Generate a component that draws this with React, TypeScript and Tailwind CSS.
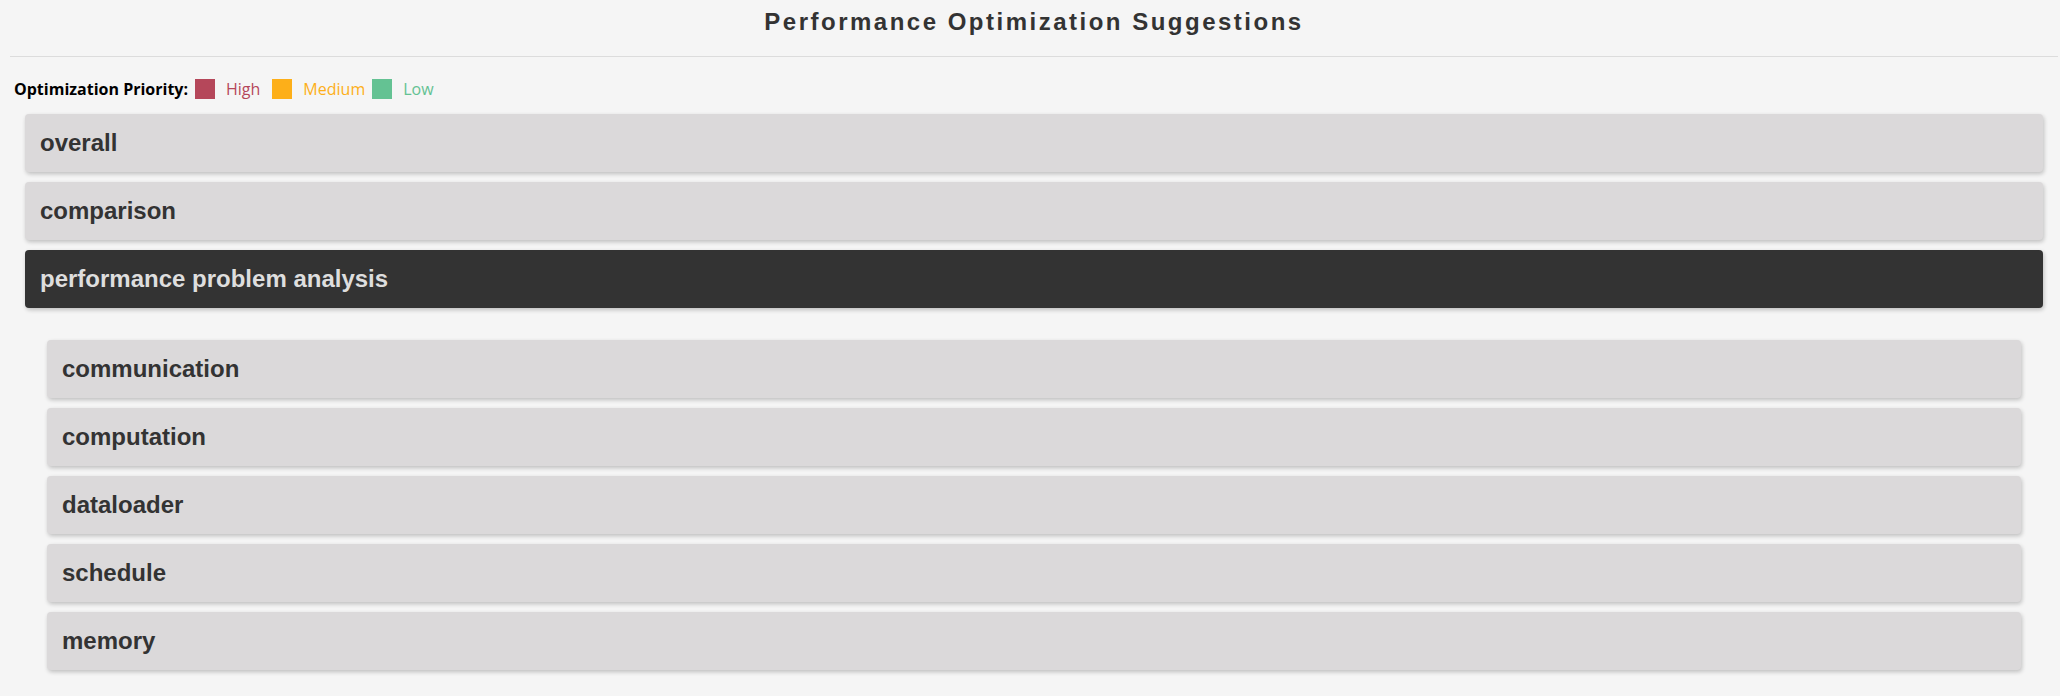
import React from "react";

const topItems = ["overall", "comparison", "performance problem analysis"];
const subItems = ["communication", "computation", "dataloader", "schedule", "memory"];

const legend = [
    { label: "High", swatch: "bg-[#b5475a]", text: "text-[#b5475a]", gap: "ml-[7px]" },
    { label: "Medium", swatch: "bg-[#fdaf19]", text: "text-[#fdaf19]", gap: "ml-[12px]" },
    { label: "Low", swatch: "bg-[#64c293]", text: "text-[#64c293]", gap: "ml-[7px]" },
];

function Panel({ title, active }: { title: string; active?: boolean }) {
    return (
        <div
            className={
                "flex h-[58px] items-center rounded-[4px] px-[15px] shadow-[1px_2px_4px_rgba(0,0,0,0.22)] " +
                (active ? "bg-[#333333] text-[#dedede]" : "bg-[#dbd9da] text-[#333333]")
            }
        >
            <span className="font-['Liberation_Sans',Arial,sans-serif] text-[24px] font-bold leading-[28px]">
                {title}
            </span>
        </div>
    );
}

export default function App() {
    return (
        <div className="min-h-screen w-full bg-[#f5f5f5] pl-[10px] pr-[2px]">
            {/* Header */}
            <div className="pt-[8px] pb-[20px] text-center">
                <h1 className="font-['Liberation_Sans',Arial,sans-serif] text-[24px] font-bold leading-[28px] tracking-[2.5px] text-[#333333]">
                    Performance Optimization Suggestions
                </h1>
            </div>
            <div className="h-px w-full bg-[#dcdcdc]" />

            {/* Priority legend */}
            <div className="mt-[22px] flex h-[20px] items-center pl-[4px] font-['Open_Sans',sans-serif] text-[16px]">
                <span className="font-bold text-black">Optimization Priority:</span>
                {legend.map((item) => (
                    <div key={item.label} className={"flex items-center " + item.gap}>
                        <span className={"h-[20px] w-[20px] " + item.swatch} />
                        <span className={"ml-[11px] " + item.text}>{item.label}</span>
                    </div>
                ))}
            </div>

            {/* Panels */}
            <div className="mt-[15px] flex flex-col gap-[10px] px-[15px]">
                {topItems.map((t) => (
                    <Panel key={t} title={t} active={t === "performance problem analysis"} />
                ))}
            </div>

            <div className="mt-[32px] flex flex-col gap-[10px] px-[37px] pb-[26px]">
                {subItems.map((t) => (
                    <Panel key={t} title={t} />
                ))}
            </div>
        </div>
    );
}
